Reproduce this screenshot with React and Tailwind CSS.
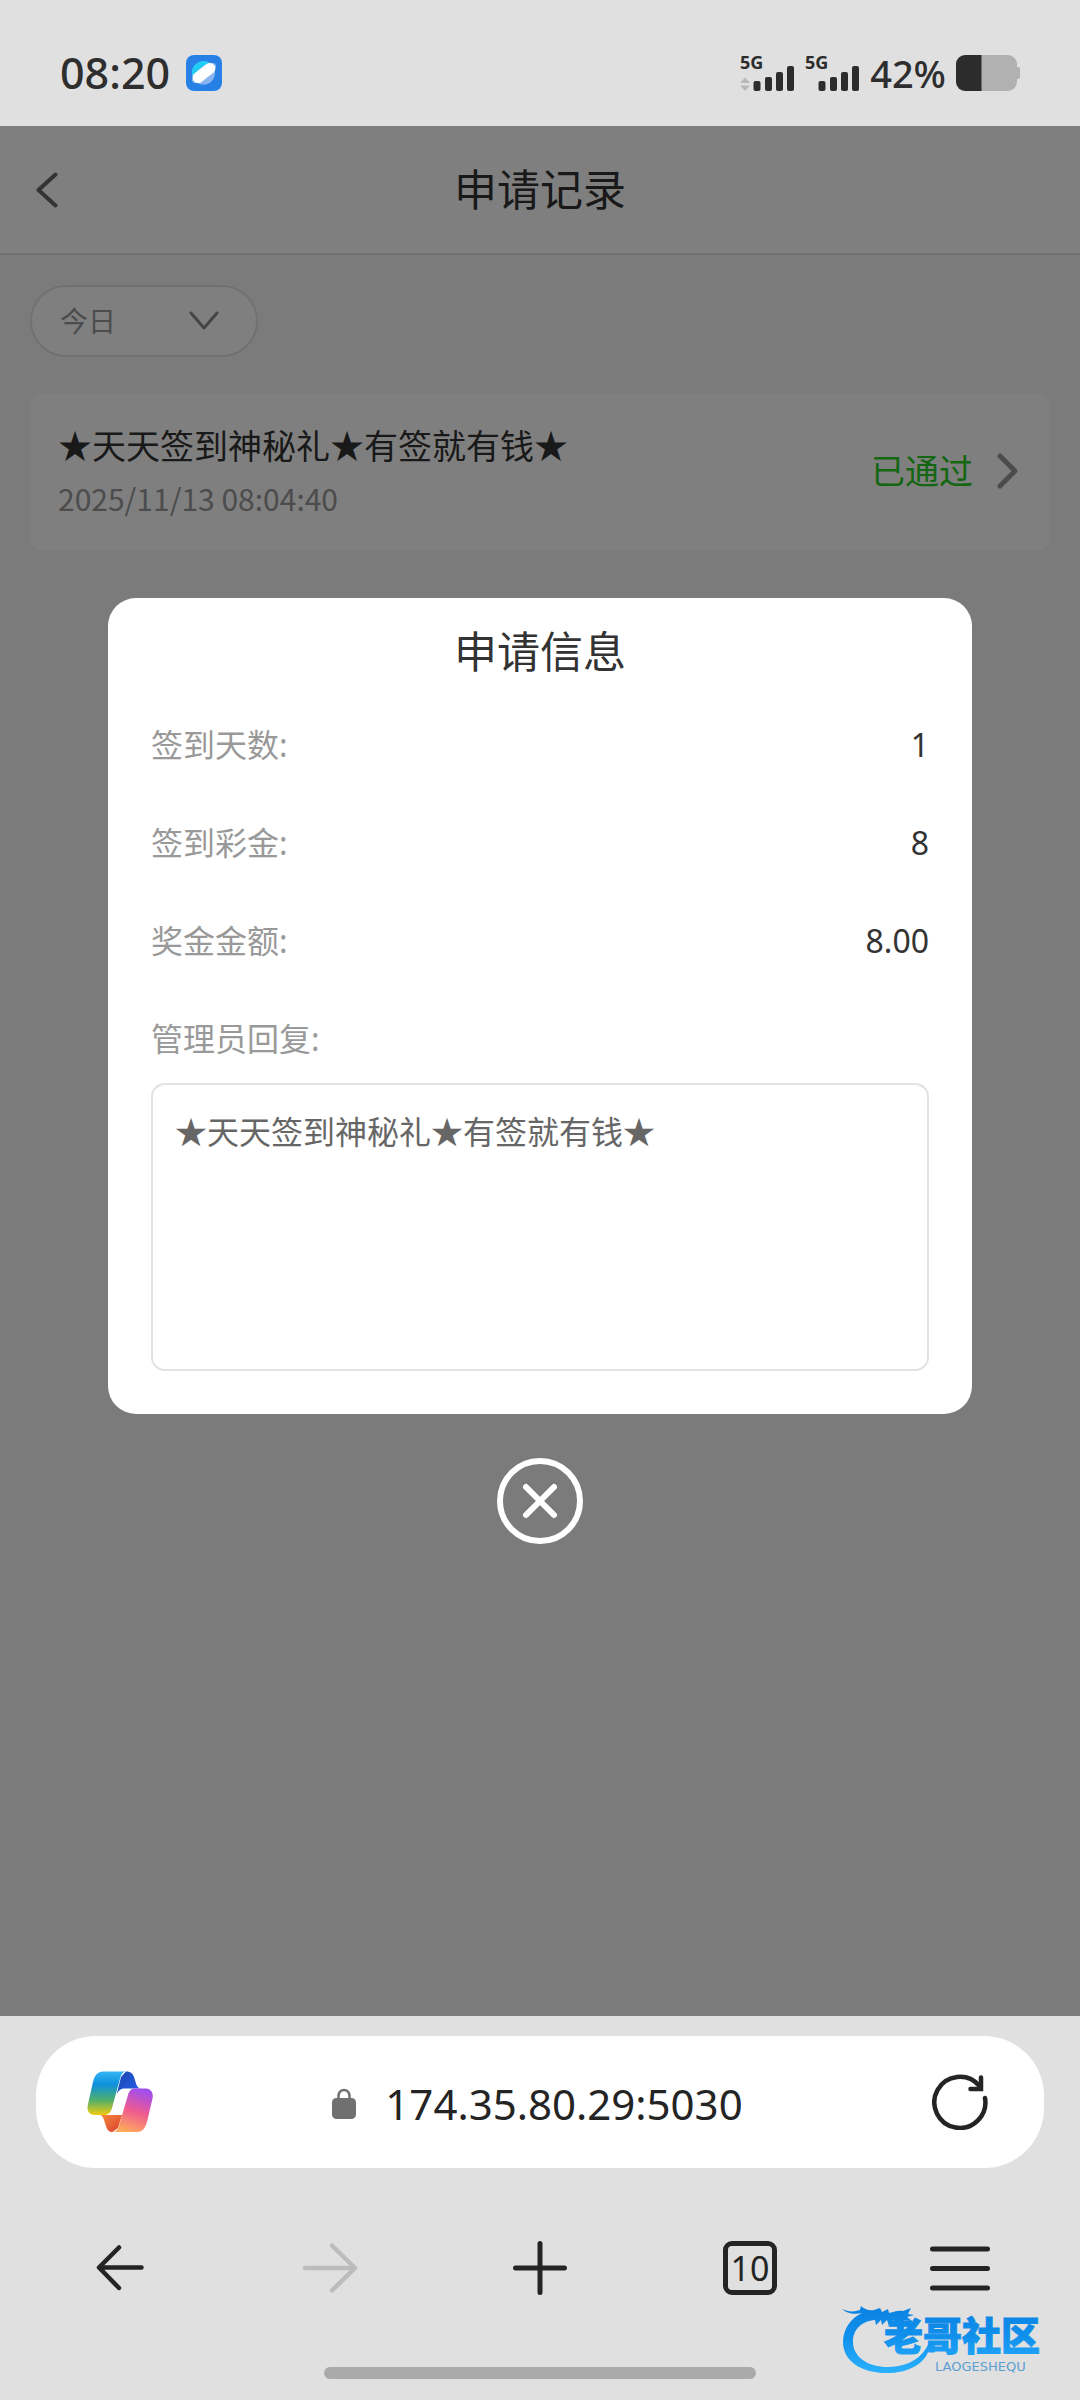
import { useState } from 'react';

const details = [
  { label: '签到天数:', value: '1' },
  { label: '签到彩金:', value: '8' },
  { label: '奖金金额:', value: '8.00' },
];

export default function App() {
  const [open, setOpen] = useState(true);

  return (
    <div
      lang="zh-CN"
      className="flex min-h-screen flex-col bg-[#e0e0e0] font-['Noto_Sans','Noto_Sans_CJK_SC',sans-serif] text-[#333]"
    >
      <StatusBar />

      <main className="relative flex-1 bg-[#f7f7f7]">
        <header className="grid h-[129px] grid-cols-[1fr_auto_1fr] items-center border-b-2 border-[#e3e3e3] bg-white px-9">
          <button type="button" aria-label="返回" className="justify-self-start">
            <svg width="22" height="36" viewBox="0 0 22 36" fill="none" stroke="#666" strokeWidth="4" strokeLinecap="round" strokeLinejoin="round">
              <path d="M19.5 2.5 2.5 18l17 15.5" />
            </svg>
          </button>
          <h1 className="text-[43px] leading-[60px]">申请记录</h1>
        </header>

        <div className="px-[30px] pt-[30px]">
          <div className="flex h-[72px] w-[228px] items-center rounded-full border-2 border-[#e3e3e3] bg-white pl-7 pr-[37px]">
            <select aria-label="日期" className="h-full min-w-0 flex-1 appearance-none bg-transparent text-[28px] text-[#999] outline-none">
              <option>今日</option>
            </select>
            <svg className="pointer-events-none shrink-0" width="30" height="20" viewBox="0 0 30 20" fill="none" stroke="#8a8a8a" strokeWidth="3" strokeLinecap="round" strokeLinejoin="round">
              <path d="M2 2l13 15L28 2" />
            </svg>
          </div>

          <a href="#record" className="mt-[37px] flex items-center justify-between rounded-[14px] bg-white pb-[31px] pl-7 pr-8 pt-7">
            <div>
              <h2 className="text-[34px] leading-[48px]">★天天签到神秘礼★有签就有钱★</h2>
              <p className="mt-1.5 font-['Noto_Sans_CJK_SC',sans-serif] text-[30px] leading-[44px] text-[#999]">2025/11/13 08:04:40</p>
            </div>
            <div className="flex items-center gap-6 text-[34px] leading-[48px] text-[#28cc24]">
              已通过
              <svg width="21" height="36" viewBox="0 0 21 36" fill="none" stroke="#999" strokeWidth="5" strokeLinecap="round" strokeLinejoin="round">
                <path d="M3 3l15 15L3 33" />
              </svg>
            </div>
          </a>
        </div>

        {open && <DetailDialog onClose={() => setOpen(false)} />}
      </main>

      <BrowserBar />
    </div>
  );
}

function StatusBar() {
  return (
    <div className="flex h-[126px] items-center justify-between px-[60px] pt-[20px] text-[#2e2e2e]">
      <div className="flex items-center gap-4">
        <span className="text-[43px] font-medium leading-[48px]">08:20</span>
        <svg width="36" height="36" viewBox="0 0 36 36">
          <rect width="36" height="36" rx="8" fill="#2680e6" />
          <circle cx="17.5" cy="18" r="11.5" fill="#8ab4f0" />
          <path d="M6 18a11.5 11.5 0 0 1 20-8L7 22z" fill="#22cdf5" />
          <ellipse cx="18" cy="18" rx="14.5" ry="6" transform="rotate(-38 18 18)" fill="#7db0f2" />
          <rect x="5" y="12.5" width="26" height="11" rx="5.5" transform="rotate(-38 18 18)" fill="#fff" />
        </svg>
      </div>
      <div className="flex items-center gap-2.5">
        <Signal arrows />
        <Signal />
        <span className="text-[38px] font-medium leading-[48px]">42%</span>
        <svg width="64" height="36" viewBox="0 0 64 36">
          <path d="M25 0h27a9 9 0 0 1 9 9v3h1q2 0 2 2v8q0 2-2 2h-1v3a9 9 0 0 1-9 9H25z" fill="#b1b1b1" />
          <path d="M25.5 0H9a9 9 0 0 0-9 9v18a9 9 0 0 0 9 9h16.5z" fill="#2c2c2c" />
        </svg>
      </div>
    </div>
  );
}

function Signal({ arrows }) {
  return (
    <svg width="55" height="52" viewBox="0 -8 55 52" fill="#2c2c2c">
      <text x="0" y="14" fontSize="18" fontWeight="700">5G</text>
      {arrows && <path d="M5 22.5l5 5.5H0zM5 36l5-5.5H0z" fill="#b8b8b8" />}
      <rect x="13.5" y="26" width="7" height="10" rx="2" />
      <rect x="25" y="22" width="7" height="14" rx="2" />
      <rect x="36" y="17" width="7" height="19" rx="2" />
      <rect x="47" y="11" width="7" height="25" rx="2" />
    </svg>
  );
}

function DetailDialog({ onClose }) {
  return (
    <div className="absolute inset-0 flex flex-col items-center justify-center gap-11 bg-black/50">
      <section role="dialog" aria-labelledby="dialog-title" className="w-4/5 rounded-[28px] bg-white px-[43px] pb-[43px] pt-6">
        <h2 id="dialog-title" className="text-center text-[43px] leading-[60px]">申请信息</h2>
        <dl className="mt-10 flex flex-col gap-[53px] text-[32px] leading-[45px]">
          {details.map((item) => (
            <div key={item.label} className="flex justify-between">
              <dt className="text-[#999]">{item.label}</dt>
              <dd>{item.value}</dd>
            </div>
          ))}
        </dl>
        <label htmlFor="reply" className="mt-[53px] block text-[32px] leading-[45px] text-[#999]">管理员回复:</label>
        <textarea
          id="reply"
          readOnly
          defaultValue="★天天签到神秘礼★有签就有钱★"
          className="mt-[22px] block h-72 w-full resize-none rounded-[14px] border-2 border-[#e2e2e2] px-[22px] py-6 text-[32px] leading-[45px] text-[#666] outline-none"
        />
      </section>
      <button type="button" aria-label="关闭" onClick={onClose}>
        <svg width="86" height="86" viewBox="0 0 86 86" fill="none" stroke="#fff" strokeWidth="6" strokeLinecap="round">
          <circle cx="43" cy="43" r="40" />
          <path d="M29 29l28 28M57 29 29 57" />
        </svg>
      </button>
    </div>
  );
}

function BrowserBar() {
  return (
    <footer className="relative bg-[#e0e0e0] pb-[21px] pt-5 text-[#242424]">
      <div className="mx-9 flex h-[132px] items-center justify-between rounded-[60px] bg-white px-[51px]">
        <button type="button" aria-label="Copilot">
          <CopilotLogo />
        </button>
        <button type="button" className="flex items-center gap-7 pr-1.5 pt-1 text-[42px] leading-[56px]">
          <svg width="26" height="32" viewBox="0 0 26 32">
            <path d="M7.5 12V7.5a5.5 5.5 0 0 1 11 0V12" fill="none" stroke="#707070" strokeWidth="2.5" />
            <rect x="1" y="10" width="24" height="21" rx="4.5" fill="#707070" />
          </svg>
          174.35.80.29:5030
        </button>
        <button type="button" aria-label="刷新" className="flex w-[66px] justify-center">
          <svg width="56" height="56" viewBox="0 0 56 56" fill="none" stroke="#242424" strokeWidth="4.5" strokeLinecap="round">
            <path d="M53 24A25.5 25.5 0 1 1 47 11.5" />
            <path d="M49 3.5V15H38.5" strokeLinejoin="miter" />
          </svg>
        </button>
      </div>

      <nav className="mt-[52px] grid h-24 grid-cols-5 px-[15px]">
        <NavButton label="后退">
          <svg width="60" height="60" viewBox="0 0 60 60" fill="none" stroke="#242424" strokeWidth="4.5" strokeLinecap="round" strokeLinejoin="round">
            <path d="M51.5 29.5H10M29 9.5l-20 20 20 20.5" />
          </svg>
        </NavButton>
        <NavButton label="前进" disabled>
          <svg width="60" height="60" viewBox="0 0 60 60" fill="none" stroke="#bcbcbc" strokeWidth="4.5" strokeLinecap="round" strokeLinejoin="round">
            <path d="M5 30h50M32 7.5 55 30 32 52.5" />
          </svg>
        </NavButton>
        <NavButton label="新建标签页">
          <svg width="60" height="60" viewBox="0 0 60 60" fill="none" stroke="#242424" strokeWidth="5" strokeLinecap="round">
            <path d="M5.5 30h49M30 5.5v49" />
          </svg>
        </NavButton>
        <NavButton label="标签页">
          <span className="flex size-[54px] items-center justify-center rounded-[9px] border-[5px] border-[#242424] text-[34px] leading-[44px]">10</span>
        </NavButton>
        <NavButton label="菜单">
          <svg width="60" height="60" viewBox="0 0 60 60" fill="none" stroke="#242424" strokeWidth="5" strokeLinecap="round">
            <path d="M2.5 11h55M2.5 30.5h55M2.5 50h55" />
          </svg>
        </NavButton>
      </nav>

      <div className="mx-auto mt-[51px] h-3 w-2/5 rounded-full bg-[#aaa]" />
      <Watermark />
    </footer>
  );
}

function NavButton({ label, disabled, children }) {
  return (
    <button type="button" aria-label={label} disabled={disabled} className="flex items-center justify-center">
      {children}
    </button>
  );
}

function CopilotLogo() {
  return (
    <svg width="66" height="62" viewBox="0 0 66 62">
      <defs>
        <linearGradient id="cp-a" x1="0" y1="0" x2="0" y2="1">
          <stop offset="0" stopColor="#35b4f5" />
          <stop offset="0.3" stopColor="#0d91dc" />
          <stop offset="0.65" stopColor="#4fae6e" />
          <stop offset="1" stopColor="#f0cc0c" />
        </linearGradient>
        <linearGradient id="cp-b" x1="0.65" y1="0" x2="0.35" y2="1">
          <stop offset="0" stopColor="#a04df0" />
          <stop offset="0.5" stopColor="#ee5a90" />
          <stop offset="1" stopColor="#ffab5c" />
        </linearGradient>
        <linearGradient id="cp-c" x1="0" y1="0" x2="1" y2="1">
          <stop offset="0" stopColor="#1a44ac" />
          <stop offset="1" stopColor="#2764f0" />
        </linearGradient>
        <linearGradient id="cp-d" x1="0" y1="0" x2="1" y2="1">
          <stop offset="0" stopColor="#f88a3c" />
          <stop offset="1" stopColor="#d8402f" />
        </linearGradient>
      </defs>
      <path d="M39 .6c5 0 7.2 2.5 8.5 6.800l1.800 5.800c1 2.800 2.300 4.300 5.200 4.300H38c-4 0-6.500 1.500-8.500 6.500L34 6z" fill="url(#cp-c)" />
      <path d="M25.5 61c-4 0-5.500-2.500-6.700-6.500L17 49c-1-3-2-5-5-5h23l-4 13z" fill="url(#cp-d)" />
      <path d="M16 .6h23c-3.500 0-5 3.600-6.500 9L25 37c-1.300 4.500-3.500 7-8 7H8C2.5 44-.5 40.500.8 34L6 11C7.800 4 11 .6 16 .6z" fill="url(#cp-a)" />
      <path d="M50 61H25.500c4 0 5.600-3 7-8L41 24c1.500-5 3.500-6.500 7-6.500h10c5.500 0 8.700 3.500 7.500 10L60 51c-2 6.800-5 10-10 10z" fill="url(#cp-b)" />
    </svg>
  );
}

function Watermark() {
  return (
    <svg className="pointer-events-none absolute bottom-6 right-4" width="224" height="72" viewBox="0 0 224 72">
      <defs>
        <linearGradient id="wm" x1="0" y1="0" x2="0" y2="72" gradientUnits="userSpaceOnUse">
          <stop offset="0" stopColor="#0a80e0" />
          <stop offset="0.45" stopColor="#1090ec" />
          <stop offset="1" stopColor="#2cb4ff" />
        </linearGradient>
      </defs>
      <path
        d="M2 5c6 3 12 3 18 1l1-4c3 3 8 5 13 4l6-2 2 4 6-3 1 4c6-1 8-3 14-2l8-3-3 6 6 1-7 2 5 4-12-1-3 4-4-4-4 6-2-6-5 5-1-5-5 5-1-5C22 17 13 25 13 38c0 16 17 26 37 25 19-1 32-9 39-24 2 15-14 29-39 30C23 70 3 58 3 38 3 25 11 14 22 9 14 11 6 9 2 5z"
        fill="url(#wm)"
      />
      <text x="44" y="46" fontSize="39" fontWeight="900" fill="url(#wm)" stroke="url(#wm)" strokeWidth="1">老哥社区</text>
      <text x="95" y="67" fontSize="13" fontFamily="DejaVu Sans" fill="#5a9fd2">LAOGESHEQU</text>
    </svg>
  );
}
